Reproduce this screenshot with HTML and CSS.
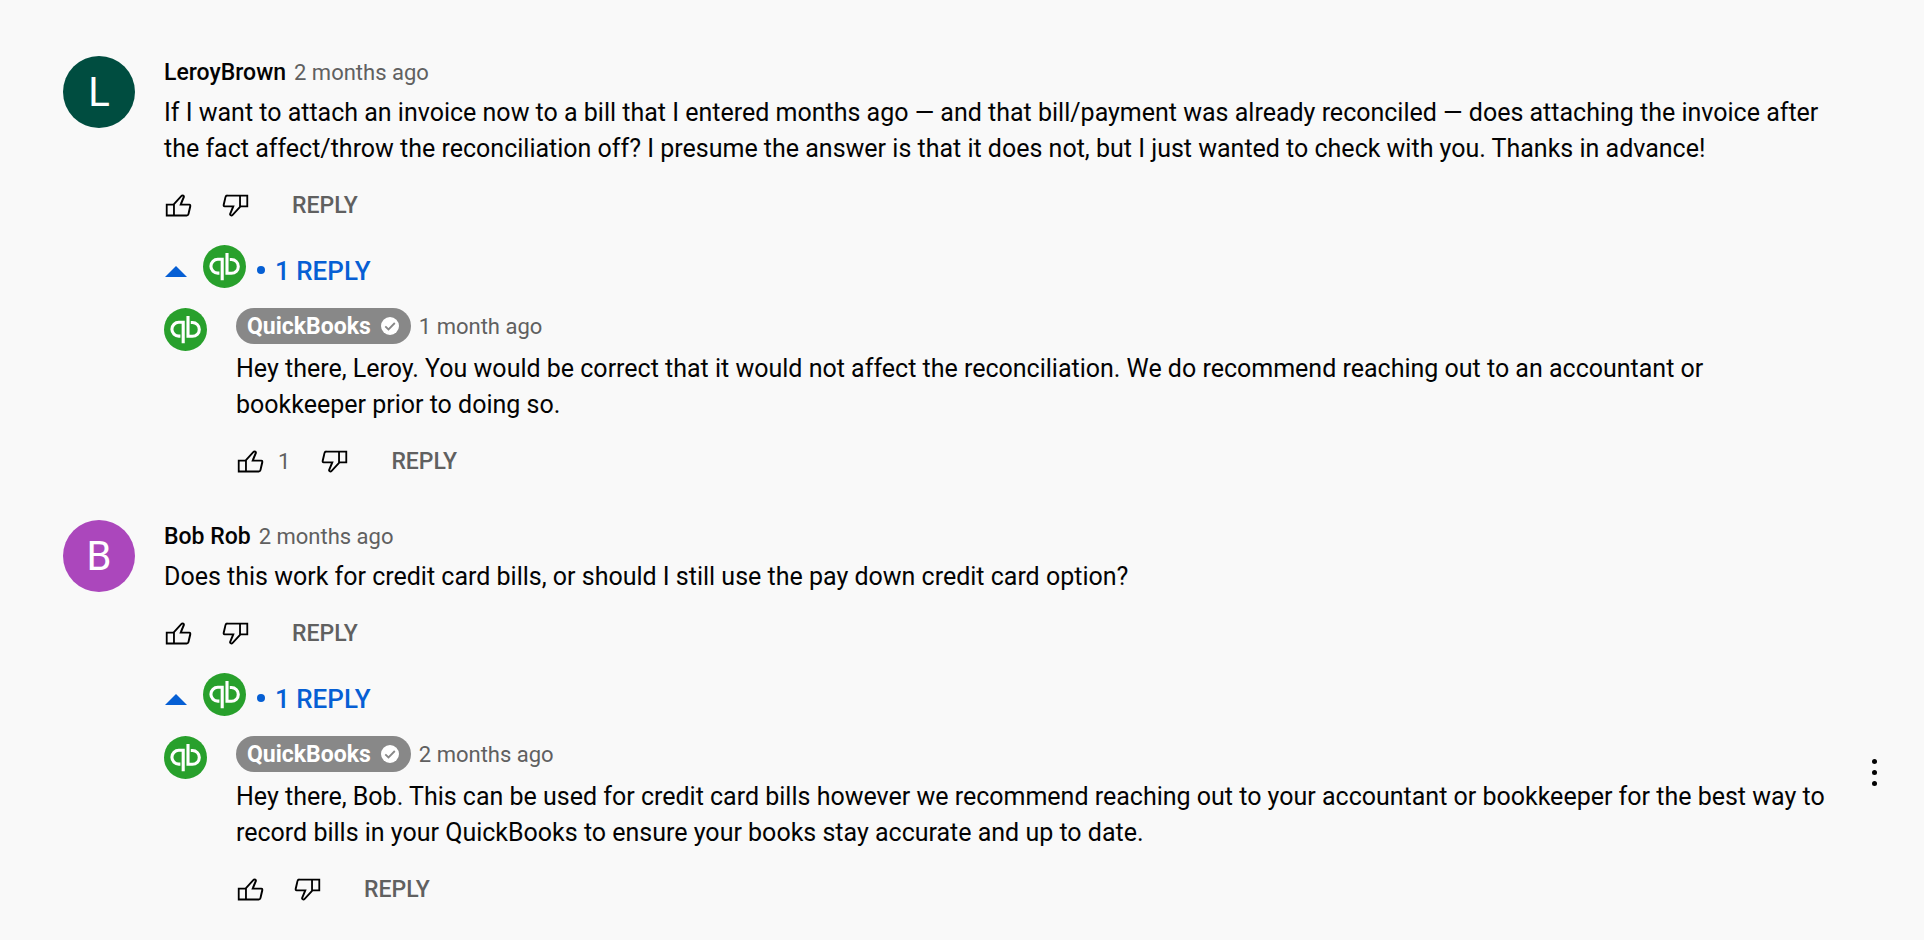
FILE: index.html
```html
<!DOCTYPE html>
<html lang="en">
<head>
    <meta charset="UTF-8">
    <meta name="viewport" content="width=device-width, initial-scale=1.0">
    <title>Comments</title>
    <link rel="stylesheet" href="styles.css">
</head>
<body>
    <!-- Shared icons -->
    <svg class="icon-defs" aria-hidden="true">
        <symbol id="icon-like" viewBox="0 0 16 16">
            <path d="M12.42,14A1.54,1.54,0,0,0,14,12.87l1-4.24C15.12,7.76,15,7,14,7H10l1.48-3.54A1.17,1.17,0,0,0,10.24,2a1.49,1.49,0,0,0-1.08.46L5,7H1v7ZM9.89,3.14A.48.48,0,0,1,10.24,3a.29.29,0,0,1,.23.09S9,6.61,9,6.61L8.46,8H14c0,.08-1,4.65-1,4.65a.58.58,0,0,1-.58.35H6V7.39ZM2,8H5v5H2Z"/>
        </symbol>
        <symbol id="icon-dislike" viewBox="0 0 16 16">
            <path d="M3.54,2A1.55,1.55,0,0,0,2,3.13L1,7.37C.83,8.24,1,9,2,9H6L4.52,12.54A1.17,1.17,0,0,0,5.71,14a1.49,1.49,0,0,0,1.09-.46L11,9h4V2ZM6.07,12.86a.51.51,0,0,1-.35.14.29.29,0,0,1-.23-.09L7,9.39,7.54,8H2c0-.08,1-4.65,1-4.65A.58.58,0,0,1,3.54,3H10V8.61ZM14,8H11V3h3Z"/>
        </symbol>
        <symbol id="icon-qb" viewBox="0 0 43 43">
            <circle cx="21.5" cy="21.5" r="21.5" fill="#28a02c"/>
            <g fill="none" stroke="#fff" stroke-width="3.1">
                <path d="M19.2 35.2V14.3H14.8a6.9 6.9 0 0 0 0 13.8H16.4"/>
                <path d="M24 8V28.3H28.4a6.9 6.9 0 0 0 0-13.8H26.8"/>
            </g>
        </symbol>
        <symbol id="icon-check" viewBox="0 0 18 18">
            <circle cx="9" cy="9" r="9" fill="#fff"/>
            <path d="M4.3 9.3L7.5 12.5L13.8 6" fill="none" stroke="#888" stroke-width="1.8"/>
        </symbol>
    </svg>

    <main class="comments">
        <article class="comment">
            <div class="avatar avatar-green">L</div>
            <div class="content">
                <header class="comment-header">
                    <a class="author" href="#">LeroyBrown</a>
                    <a class="time" href="#">2 months ago</a>
                </header>
                <p class="text">If I want to attach an invoice now to a bill that I entered months ago — and that bill/payment was already reconciled — does attaching the invoice after the fact affect/throw the reconciliation off? I presume the answer is that it does not, but I just wanted to check with you. Thanks in advance!</p>
                <div class="toolbar">
                    <button class="icon-btn" aria-label="Like"><svg><use href="#icon-like"/></svg></button>
                    <button class="icon-btn dislike" aria-label="Dislike"><svg><use href="#icon-dislike"/></svg></button>
                    <button class="reply-btn">REPLY</button>
                </div>

                <button class="toggle-replies">
                    <span class="caret"></span>
                    <svg class="qb"><use href="#icon-qb"/></svg>
                    <span class="bullet"></span>
                    <span class="toggle-label">1 REPLY</span>
                </button>

                <article class="reply">
                    <svg class="qb"><use href="#icon-qb"/></svg>
                    <div class="content">
                        <header class="reply-header">
                            <a class="badge" href="#">QuickBooks <svg><use href="#icon-check"/></svg></a>
                            <a class="time" href="#">1 month ago</a>
                        </header>
                        <p class="text">Hey there, Leroy. You would be correct that it would not affect the reconciliation. We do recommend reaching out to an accountant or bookkeeper prior to doing so.</p>
                        <div class="toolbar">
                            <button class="icon-btn" aria-label="Like"><svg><use href="#icon-like"/></svg></button>
                            <span class="count">1</span>
                            <button class="icon-btn dislike" aria-label="Dislike"><svg><use href="#icon-dislike"/></svg></button>
                            <button class="reply-btn">REPLY</button>
                        </div>
                    </div>
                </article>
            </div>
        </article>

        <article class="comment">
            <div class="avatar avatar-purple">B</div>
            <div class="content">
                <header class="comment-header">
                    <a class="author" href="#">Bob Rob</a>
                    <a class="time" href="#">2 months ago</a>
                </header>
                <p class="text">Does this work for credit card bills, or should I still use the pay down credit card option?</p>
                <div class="toolbar">
                    <button class="icon-btn" aria-label="Like"><svg><use href="#icon-like"/></svg></button>
                    <button class="icon-btn dislike" aria-label="Dislike"><svg><use href="#icon-dislike"/></svg></button>
                    <button class="reply-btn">REPLY</button>
                </div>

                <button class="toggle-replies">
                    <span class="caret"></span>
                    <svg class="qb"><use href="#icon-qb"/></svg>
                    <span class="bullet"></span>
                    <span class="toggle-label">1 REPLY</span>
                </button>

                <article class="reply has-menu">
                    <svg class="qb"><use href="#icon-qb"/></svg>
                    <div class="content">
                        <header class="reply-header">
                            <a class="badge" href="#">QuickBooks <svg><use href="#icon-check"/></svg></a>
                            <a class="time" href="#">2 months ago</a>
                        </header>
                        <p class="text">Hey there, Bob. This can be used for credit card bills however we recommend reaching out to your accountant or bookkeeper for the best way to record bills in your QuickBooks to ensure your books stay accurate and up to date.</p>
                        <div class="toolbar">
                            <button class="icon-btn" aria-label="Like"><svg><use href="#icon-like"/></svg></button>
                            <button class="icon-btn dislike" aria-label="Dislike"><svg><use href="#icon-dislike"/></svg></button>
                            <button class="reply-btn">REPLY</button>
                        </div>
                    </div>
                    <button class="menu-btn" aria-label="Action menu">
                        <span class="dot"></span>
                        <span class="dot"></span>
                        <span class="dot"></span>
                    </button>
                </article>
            </div>
        </article>
    </main>
</body>
</html>
```
FILE: styles.css
```css
/* General Styles */
* {
    box-sizing: border-box;
}

body {
    font-family: Roboto, "Liberation Sans", sans-serif;
    background-color: #f9f9f9;
    color: #030303;
    margin: 0;
}

a {
    color: inherit;
    text-decoration: none;
}

button {
    font-family: inherit;
    color: inherit;
    background: none;
    border: none;
    padding: 0;
    cursor: pointer;
}

svg {
    display: block;
    flex-shrink: 0;
}

.icon-defs {
    position: absolute;
    width: 0;
    height: 0;
}

/* Comment Layout */
.comments {
    padding: 56px 32px 0 63px;
}

.comment {
    display: flex;
    margin-bottom: 39px;
}

.comment:last-child {
    margin-bottom: 20px;
}

.content {
    flex: 1;
    min-width: 0;
    margin-left: 29px;
}

.avatar {
    display: flex;
    align-items: center;
    justify-content: center;
    flex-shrink: 0;
    width: 72px;
    height: 72px;
    border-radius: 50%;
    color: #fff;
    font-size: 40px;
}

.avatar-green {
    background-color: #004d40;
}

.avatar-purple {
    background-color: #ab47bc;
}

/* Author and Time */
.comment-header {
    display: flex;
    align-items: center;
    gap: 8px;
    height: 32px;
    margin-bottom: 7px;
    font-size: 23px;
}

.author {
    font-weight: 500;
}

.time {
    color: #606060;
    font-size: 22px;
}

.text {
    margin: 0;
    padding-right: 60px;
    font-size: 25px;
    line-height: 36px;
}

.has-menu .text {
    padding-right: 0;
}

/* Like, Dislike, Reply */
.toolbar {
    display: flex;
    align-items: center;
    height: 40px;
    margin-top: 18px;
}

.icon-btn svg {
    width: 29px;
    height: 29px;
}

.count {
    margin: 0 2px 0 13px;
    color: #606060;
    font-size: 22px;
}

.dislike {
    margin-left: 28px;
}

.reply-btn {
    margin-left: 42px;
    color: #606060;
    font-size: 23px;
    font-weight: 500;
}

/* Replies */
.toggle-replies {
    display: flex;
    align-items: center;
    margin-top: 20px;
    color: #065fd4;
    font-size: 26px;
    font-weight: 500;
}

.caret {
    margin: 10px 16px 0 1px;
    border-left: 11px solid transparent;
    border-right: 11px solid transparent;
    border-bottom: 11px solid #065fd4;
}

.qb {
    width: 43px;
    height: 43px;
}

.bullet {
    width: 8px;
    height: 8px;
    margin: 7px 0 0 11px;
    border-radius: 50%;
    background-color: #065fd4;
}

.toggle-label {
    padding-top: 9px;
    margin-left: 10px;
}

.reply {
    display: flex;
    margin-top: 20px;
}

.reply-header {
    display: flex;
    align-items: center;
    gap: 8px;
    margin-bottom: 7px;
}

.badge {
    display: flex;
    align-items: center;
    gap: 10px;
    height: 36px;
    padding: 0 12px 0 11px;
    border-radius: 18px;
    background-color: #888;
    color: #fff;
    font-size: 23px;
    font-weight: 700;
}

.badge svg {
    width: 18px;
    height: 18px;
}

/* Action Menu */
.menu-btn {
    display: flex;
    flex-direction: column;
    align-items: center;
    gap: 6px;
    align-self: flex-start;
    width: 36px;
    margin-left: 24px;
    padding-top: 23px;
}

.dot {
    width: 5px;
    height: 5px;
    border-radius: 50%;
    background-color: #030303;
}
```
